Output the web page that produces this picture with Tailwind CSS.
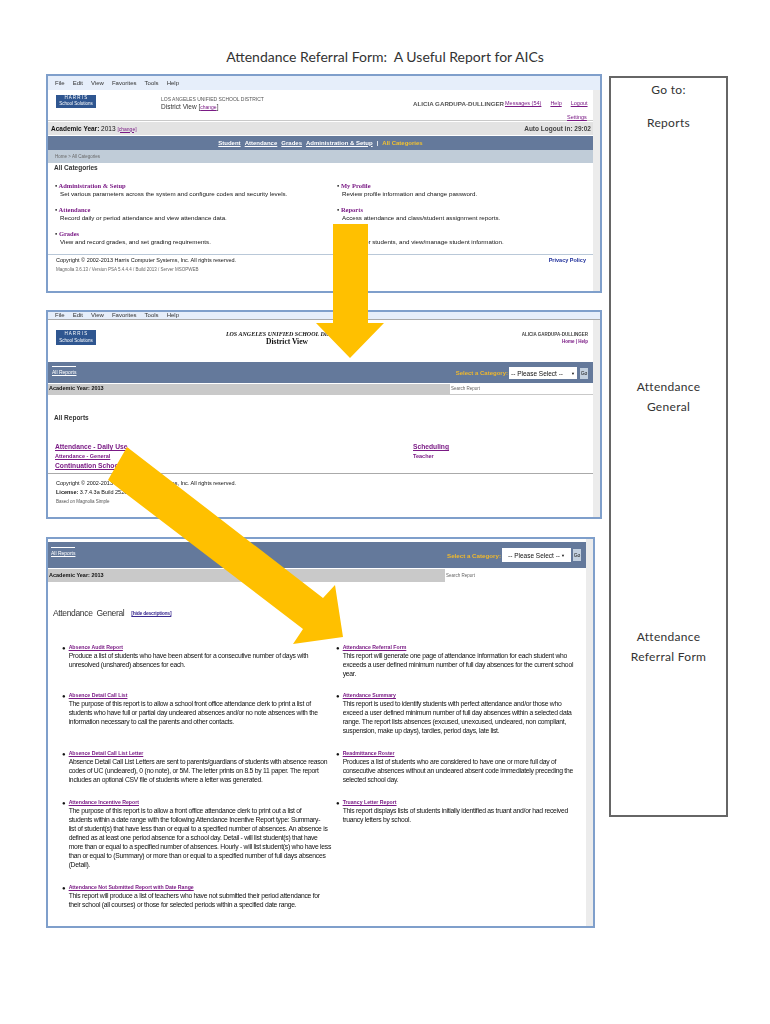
<!DOCTYPE html>
<html lang="en">
<head>
  <meta charset="UTF-8">
  <title>Attendance Referral Form</title>
  <script src="https://cdn.jsdelivr.net/npm/@tailwindcss/browser@4"></script>
</head>
<body class="bg-white">
<div class="relative w-[770px] h-[1024px] overflow-hidden bg-white font-['Lato','Open_Sans',sans-serif] text-[#222]">

  <!-- Title -->
  <div class="pt-[47px] h-[74px] text-center text-[14px] leading-[20px] whitespace-pre text-[#333]">Attendance Referral Form:  A Useful Report for AICs</div>

  <div class="flex pl-[46px]">
    <div class="w-[556px] flex flex-col">

      <!-- Window 1: All Categories -->
      <div class="h-[219px] border-2 border-[#7f9fcb] bg-white flex flex-col overflow-hidden font-['Liberation_Sans',sans-serif] text-[6.2px] leading-[9px] text-[#111] blur-[0.5px]">
        <div class="h-[14px] shrink-0 bg-[#e6eefa] flex items-center gap-[8px] pl-[7px] text-[6px] text-[#333]">
          <span>File</span><span>Edit</span><span>View</span><span>Favorites</span><span>Tools</span><span>Help</span>
        </div>
        <div class="flex-1 flex min-h-0">
          <div class="flex-1 min-w-0 flex flex-col">
            <div class="h-[31px] shrink-0 border-b border-[#c9c9c9] flex pl-[8px] pr-[4px] pt-[5px]">
              <div class="w-[40px] h-[13px] bg-[#2f5690] text-white text-[4.5px] leading-[6px] text-center">H A R R I S<br>School Solutions</div>
              <div class="w-[252px] pl-[65px] text-[5px] leading-[8px] whitespace-nowrap text-[#555]">LOS ANGELES UNIFIED SCHOOL DISTRICT<br><span class="text-[6.5px] text-[#333]">District View [<u class="text-[#7a1a85] text-[5px]">change</u>]</span></div>
              <div class="flex-1 pl-[65px] pt-[4px] whitespace-nowrap">
                <span class="font-bold text-[#555]">ALICIA GARDUPA-DULLINGER</span>
              </div>
            </div>
            <div class="h-[13px] shrink-0 bg-[#e3e3e3] flex justify-between items-center pl-[3px] pr-[2px] text-[6.5px] mt-[1px]">
              <span><b>Academic Year:</b> 2013 <u class="text-[#7a1a85] text-[5px]">[change]</u></span>
              <b class="text-[#444]">Auto Logout in: 29:02</b>
            </div>
            <div class="h-[14px] shrink-0 bg-[#64799b] flex justify-center items-center gap-[4px] text-[6px] font-bold text-white mt-[1px]">
              <u>Student</u><u>Attendance</u><u>Grades</u><u>Administration &amp; Setup</u><span>|</span><span class="text-[#f2c230]">All Categories</span>
            </div>
            <div class="h-[13px] shrink-0 bg-[#c0ccd8] flex items-center pl-[7px] text-[4.5px] text-[#666]">Home &gt; All Categories</div>
            <div class="h-[9px] shrink-0 pl-[6px] text-[6.5px] font-bold text-[#333]">All Categories</div>
            <div class="grid grid-cols-[282px_1fr] auto-rows-[24px] pl-[7px] pt-[10px] leading-[8px] whitespace-nowrap">
              <div><div class="font-['Liberation_Serif',serif] text-[6.5px] font-bold text-[#7a1a85]"><span class="text-[#222]">&#8226;</span> Administration &amp; Setup</div><div class="pl-[5px]">Set various parameters across the system and configure codes and security levels.</div></div>
              <div><div class="font-['Liberation_Serif',serif] text-[6.5px] font-bold text-[#7a1a85]"><span class="text-[#222]">&#8226;</span> My Profile</div><div class="pl-[5px]">Review profile information and change password.</div></div>
              <div><div class="font-['Liberation_Serif',serif] text-[6.5px] font-bold text-[#7a1a85]"><span class="text-[#222]">&#8226;</span> Attendance</div><div class="pl-[5px]">Record daily or period attendance and view attendance data.</div></div>
              <div><div class="font-['Liberation_Serif',serif] text-[6.5px] font-bold text-[#7a1a85]"><span class="text-[#222]">&#8226;</span> Reports</div><div class="pl-[5px]">Access attendance and class/student assignment reports.</div></div>
              <div><div class="font-['Liberation_Serif',serif] text-[6.5px] font-bold text-[#7a1a85]"><span class="text-[#222]">&#8226;</span> Grades</div><div class="pl-[5px]">View and record grades, and set grading requirements.</div></div>
              <div><div class="font-['Liberation_Serif',serif] text-[6.5px] font-bold text-[#7a1a85]"><span class="text-[#222]">&#8226;</span> Students</div><div class="pl-[5px]">Search for students, and view/manage student information.</div></div>
            </div>
            <div class="border-t border-[#b9c8d8] pl-[8px] pr-[7px] pt-[1px] flex justify-between whitespace-nowrap text-[5.5px]">
              <span>Copyright &copy; 2002-2013 Harris Computer Systems, Inc. All rights reserved.</span>
              <b class="text-[#1f2f9a]">Privacy Policy</b>
            </div>
            <div class="pl-[8px] text-[4.5px] text-[#666] whitespace-nowrap">Magnolia 3.6.13 / Version PSA 5.4.4.4 / Build 2013 / Server MSOPWEB</div>
          </div>
          <div class="w-[7px] shrink-0 bg-[#ececec]"></div>
        </div>
      </div>

      <!-- Window 2: All Reports -->
      <div class="mt-[17px] h-[209px] border-2 border-[#7f9fcb] bg-white flex flex-col overflow-hidden font-['Liberation_Sans',sans-serif] text-[6px] leading-[9px] text-[#111] blur-[0.5px]">
        <div class="h-[8px] shrink-0 bg-[#e6eefa] border-b border-[#aaa] flex items-center gap-[8px] pl-[7px] text-[#333]">
          <span>File</span><span>Edit</span><span>View</span><span>Favorites</span><span>Tools</span><span>Help</span>
        </div>
        <div class="flex-1 flex min-h-0">
          <div class="flex-1 min-w-0 flex flex-col">
            <div class="h-[42px] shrink-0 flex pl-[8px] pr-[5px] pt-[10px]">
              <div class="w-[40px] h-[15px] bg-[#2f5690] text-white text-[4.5px] leading-[7px] text-center">H A R R I S<br>School Solutions</div>
              <div class="w-[360px] pl-[22px] text-center font-['Liberation_Serif',serif] font-bold leading-[8px] whitespace-nowrap"><i>LOS ANGELES UNIFIED SCHOOL DISTRICT</i><br><span class="text-[7.5px]">District View</span></div>
              <div class="flex-1 text-right text-[4.5px] leading-[7px] whitespace-nowrap font-bold text-[#444] pt-[1px]">ALICIA GARDUPA-DULLINGER<br><span class="text-[#7a1a85]">Home | Help</span></div>
            </div>
            <div class="h-[21px] shrink-0 bg-[#64799b] flex justify-between pl-[4px] pr-[5px]">
              <div class="mt-[4px] h-[11px] border-t-[1.5px] border-white pt-[1px] text-[5px] text-white"><u>All Reports</u></div>
              <div class="flex items-center gap-[1px] mt-[4px] h-[14px] whitespace-nowrap">
                <span class="font-bold text-[#f0b92c]">Select a Category:</span>
                <span class="w-[68px] h-[12px] bg-white flex justify-between items-center px-[2px] text-[6.5px]">-- Please Select -- <span class="text-[4px]">&#9660;</span></span>
                <span class="w-[8px] h-[11px] ml-[2px] bg-[#c3d0df] text-[5px] flex items-center justify-center">Go</span>
              </div>
            </div>
            <div class="h-[11px] shrink-0 mt-[1px] bg-[#c9c9c9] flex justify-between whitespace-nowrap">
              <b class="pl-[1px] text-[5.5px]">Academic Year: 2013</b>
              <span class="w-[143px] h-[10px] bg-white pl-[1px] text-[4.5px] text-[#666]">Search Report</span>
            </div>
            <div class="pl-[6px] pt-[18px] text-[6.5px] font-bold text-[#333]">All Reports</div>
            <div class="grid grid-cols-[358px_1fr] pl-[7px] pt-[20px] h-[48px] font-bold whitespace-nowrap">
              <div class="text-[#7a1a85] text-[6.7px]"><u>Attendance - Daily Use</u><br><u class="text-[5.5px]">Attendance - General</u><br><u>Continuation Schools</u></div>
              <div class="text-[#7a1a85] text-[6.7px]"><u>Scheduling</u><br><span class="text-[5.5px]">Teacher</span></div>
            </div>
            <div class="border-t border-[#aaa] mt-[3px] pl-[8px] pt-[5px] text-[5.5px] whitespace-nowrap">Copyright &copy; 2002-2013 Harris Computer Systems, Inc. All rights reserved.<br><b>License:</b> 3.7.4.3a Build 2520<br><span class="text-[4.5px] text-[#555]">Based on Magnolia Simple</span></div>
          </div>
          <div class="w-[7px] shrink-0 bg-[#ececec]"></div>
        </div>
      </div>

      <!-- Window 3: Attendance - General -->
      <div class="mt-[18px] w-[549px] h-[391px] border-2 border-[#7f9fcb] bg-white flex overflow-hidden font-['Liberation_Sans',sans-serif] text-[6.8px] leading-[9px] text-[#111] blur-[0.5px]">
        <div class="flex-1 min-w-0 flex flex-col pt-[3px]">
          <div class="h-[26px] shrink-0 bg-[#64799b] flex justify-between pl-[3px] pr-[5px]">
            <div class="mt-[5px] h-[12px] border-t-[1.5px] border-white pt-[1px] text-[5px] text-white"><u>All Reports</u></div>
            <div class="flex items-center gap-[1px] mt-[6px] h-[14px] whitespace-nowrap text-[6.2px]">
              <span class="font-bold text-[#f0b92c]">Select a Category:</span>
              <span class="w-[69px] h-[14px] bg-white flex justify-between items-center px-[6px] text-[6.5px]">-- Please Select -- <span class="text-[4px]">&#9660;</span></span>
              <span class="w-[8px] h-[12px] ml-[1px] bg-[#c3d0df] text-[5px] flex items-center justify-center">Go</span>
            </div>
          </div>
          <div class="h-[13px] shrink-0 mt-[1px] bg-[#c9c9c9] flex justify-between whitespace-nowrap">
            <b class="pl-[1px] pt-[2px] text-[5.5px]">Academic Year: 2013</b>
            <span class="w-[141px] h-[13px] bg-white pl-[1px] pt-[2px] text-[4.5px] text-[#666]">Search Report</span>
          </div>
          <div class="pl-[5px] pt-[19px] flex items-center gap-[7px] h-[44px] whitespace-pre">
            <span class="text-[8.5px] tracking-[-0.35px] text-[#333]">Attendance  General</span>
            <u class="text-[5px] tracking-[-0.25px] font-bold text-[#3b2a90]">[hide descriptions]</u>
          </div>
          <div class="grid grid-cols-[274px_1fr] grid-rows-[48px_58px_49px_85px_1fr] pl-[14px] pt-[18px] whitespace-nowrap flex-1 tracking-[-0.27px]">
            <div class="flex gap-[3px]"><span class="text-[6px] tracking-normal">&#9679;</span><div><u class="block font-bold text-[5.2px] leading-[7px] tracking-normal text-[#7a1a85]">Absence Audit Report</u>Produce a list of students who have been absent for a consecutive number of days with<br>unresolved (unshared) absences for each.</div></div>
            <div class="flex gap-[3px]"><span class="text-[6px] tracking-normal">&#9679;</span><div><u class="block font-bold text-[5.2px] leading-[7px] tracking-normal text-[#7a1a85]">Attendance Referral Form</u>This report will generate one page of attendance information for each student who<br>exceeds a user defined minimum number of full day absences for the current school<br>year.</div></div>
            <div class="flex gap-[3px]"><span class="text-[6px] tracking-normal">&#9679;</span><div><u class="block font-bold text-[5.2px] leading-[7px] tracking-normal text-[#7a1a85]">Absence Detail Call List</u>The purpose of this report is to allow a school front office attendance clerk to print a list of<br>students who have full or partial day uncleared absences and/or no note absences with the<br>information necessary to call the parents and other contacts.</div></div>
            <div class="flex gap-[3px]"><span class="text-[6px] tracking-normal">&#9679;</span><div><u class="block font-bold text-[5.2px] leading-[7px] tracking-normal text-[#7a1a85]">Attendance Summary</u>This report is used to identify students with perfect attendance and/or those who<br>exceed a user defined minimum number of full day absences within a selected data<br>range. The report lists absences (excused, unexcused, uncleared, non compliant,<br>suspension, make up days), tardies, period days, late list.</div></div>
            <div class="flex gap-[3px]"><span class="text-[6px] tracking-normal">&#9679;</span><div><u class="block font-bold text-[5.2px] leading-[7px] tracking-normal text-[#7a1a85]">Absence Detail Call List Letter</u>Absence Detail Call List Letters are sent to parents/guardians of students with absence reason<br>codes of UC (uncleared), 0 (no note), or 5M. The letter prints on 8.5 by 11 paper. The report<br>includes an optional CSV file of students where a letter was generated.</div></div>
            <div class="flex gap-[3px]"><span class="text-[6px] tracking-normal">&#9679;</span><div><u class="block font-bold text-[5.2px] leading-[7px] tracking-normal text-[#7a1a85]">Readmittance Roster</u>Produces a list of students who are considered to have one or more full day of<br>consecutive absences without an uncleared absent code immediately preceding the<br>selected school day.</div></div>
            <div class="flex gap-[3px]"><span class="text-[6px] tracking-normal">&#9679;</span><div><u class="block font-bold text-[5.2px] leading-[7px] tracking-normal text-[#7a1a85]">Attendance Incentive Report</u>The purpose of this report is to allow a front office attendance clerk to print out a list of<br>students within a date range with the following Attendance Incentive Report type: Summary-<br>list of student(s) that have less than or equal to a specified number of absences. An absence is<br>defined as at least one period absence for a school day. Detail - will list student(s) that have<br>more than or equal to a specified number of absences. Hourly - will list student(s) who have less<br>than or equal to (Summary) or more than or equal to a specified number of full days absences<br>(Detail).</div></div>
            <div class="flex gap-[3px]"><span class="text-[6px] tracking-normal">&#9679;</span><div><u class="block font-bold text-[5.2px] leading-[7px] tracking-normal text-[#7a1a85]">Truancy Letter Report</u>This report displays lists of students initially identified as truant and/or had received<br>truancy letters by school.</div></div>
            <div class="flex gap-[3px]"><span class="text-[6px] tracking-normal">&#9679;</span><div><u class="block font-bold text-[5.2px] leading-[7px] tracking-normal text-[#7a1a85]">Attendance Not Submitted Report with Date Range</u>This report will produce a list of teachers who have not submitted their period attendance for<br>their school (all courses) or those for selected periods within a specified date range.</div></div>
          </div>
        </div>
        <div class="w-[7px] shrink-0 bg-[#ececec]"></div>
      </div>
    </div>

    <!-- Right hand box -->
    <div class="ml-[7px] mt-[2px] w-[119px] h-[741px] border-2 border-[#666] text-center text-[12px] leading-[20px] tracking-[0.3px] text-[#333] pt-[2px]">
      <div>Go to:</div>
      <div class="mt-[13px]">Reports</div>
      <div class="mt-[244px]">Attendance</div>
      <div>General</div>
      <div class="mt-[210px]">Attendance</div>
      <div>Referral Form</div>
    </div>
  </div>

  <!-- Top bar links on window 1 (sit on the screenshot's header) -->
  <div class="absolute left-[505px] top-[99px] flex gap-[9px] font-['Liberation_Sans',sans-serif] text-[5.5px] leading-[8px] whitespace-nowrap text-[#7a1a85] blur-[0.5px]">
    <u>Messages (54)</u><u>Help</u><u>Logout</u>
  </div>
  <div class="absolute left-[567px] top-[113px] font-['Liberation_Sans',sans-serif] text-[5.5px] leading-[8px] text-[#7a1a85] blur-[0.5px]"><u>Settings</u></div>

  <!-- Yellow arrows over the screenshots -->
  <svg class="absolute left-0 top-0" width="770" height="1024" viewBox="0 0 770 1024">
    <polygon fill="#ffc000" points="333,224 368,224 368,323 384,323 350,358 316,323 333,323"/>
    <polygon fill="#ffc000" points="127,447 108,480 303,629 293,644 343,637 335,585 323,598"/>
  </svg>
</div>
</body>
</html>
